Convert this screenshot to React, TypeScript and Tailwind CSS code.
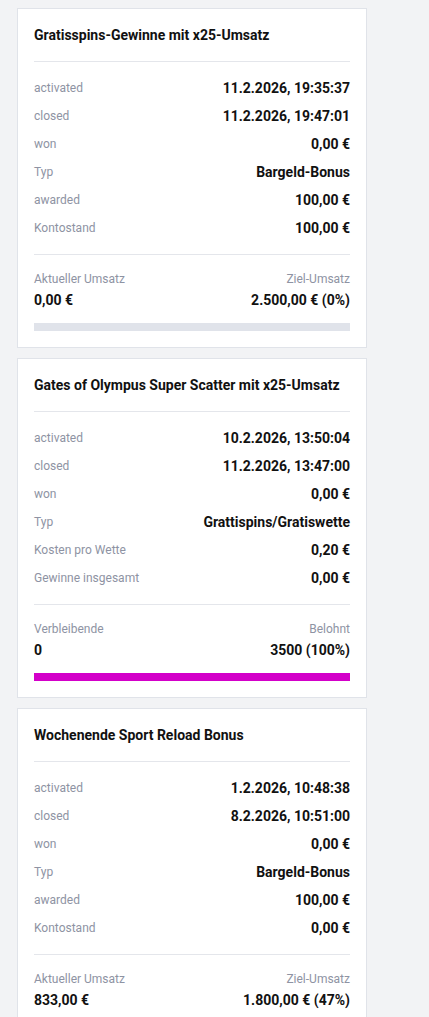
import React from "react";

type Row = { label: string; value: string };
type Card = {
  title: string;
  rows: Row[];
  leftLabel: string;
  leftValue: string;
  rightLabel: string;
  rightValue: string;
  pct: number;
};

const cards: Card[] = [
  {
    title: "Gratisspins-Gewinne mit x25-Umsatz",
    rows: [
      { label: "activated", value: "11.2.2026, 19:35:37" },
      { label: "closed", value: "11.2.2026, 19:47:01" },
      { label: "won", value: "0,00 €" },
      { label: "Typ", value: "Bargeld-Bonus" },
      { label: "awarded", value: "100,00 €" },
      { label: "Kontostand", value: "100,00 €" },
    ],
    leftLabel: "Aktueller Umsatz",
    leftValue: "0,00 €",
    rightLabel: "Ziel-Umsatz",
    rightValue: "2.500,00 € (0%)",
    pct: 0,
  },
  {
    title: "Gates of Olympus Super Scatter mit x25-Umsatz",
    rows: [
      { label: "activated", value: "10.2.2026, 13:50:04" },
      { label: "closed", value: "11.2.2026, 13:47:00" },
      { label: "won", value: "0,00 €" },
      { label: "Typ", value: "Grattispins/Gratiswette" },
      { label: "Kosten pro Wette", value: "0,20 €" },
      { label: "Gewinne insgesamt", value: "0,00 €" },
    ],
    leftLabel: "Verbleibende",
    leftValue: "0",
    rightLabel: "Belohnt",
    rightValue: "3500 (100%)",
    pct: 100,
  },
  {
    title: "Wochenende Sport Reload Bonus",
    rows: [
      { label: "activated", value: "1.2.2026, 10:48:38" },
      { label: "closed", value: "8.2.2026, 10:51:00" },
      { label: "won", value: "0,00 €" },
      { label: "Typ", value: "Bargeld-Bonus" },
      { label: "awarded", value: "100,00 €" },
      { label: "Kontostand", value: "0,00 €" },
    ],
    leftLabel: "Aktueller Umsatz",
    leftValue: "833,00 €",
    rightLabel: "Ziel-Umsatz",
    rightValue: "1.800,00 € (47%)",
    pct: 47,
  },
];

function BonusCard({ c }: { c: Card }) {
  return (
    <div className="w-[350px] bg-white border border-[#e0e3e9] p-4">
      <div className="text-sm font-bold leading-5 text-[#111111]">{c.title}</div>
      <div className="mt-4 border-t border-[#e4e6eb]" />
      <div className="pt-3">
        {c.rows.map((r) => (
          <div key={r.label} className="h-7 flex items-center justify-between">
            <span className="text-xs leading-4 text-[#8e93a3]">{r.label}</span>
            <span className="text-sm font-bold leading-5 text-[#111111]">{r.value}</span>
          </div>
        ))}
      </div>
      <div className="mt-3 border-t border-[#e4e6eb]" />
      <div className="pt-4 flex justify-between">
        <div className="flex flex-col">
          <span className="text-xs leading-4 text-[#8e93a3]">{c.leftLabel}</span>
          <span className="mt-[3px] text-sm font-bold leading-5 text-[#111111]">{c.leftValue}</span>
        </div>
        <div className="flex flex-col items-end">
          <span className="text-xs leading-4 text-[#8e93a3]">{c.rightLabel}</span>
          <span className="mt-[3px] text-sm font-bold leading-5 text-[#111111]">{c.rightValue}</span>
        </div>
      </div>
      <div className="mt-[13px] h-2 bg-[#e0e3ea]">
        <div className="h-2 bg-[#d300c9]" style={{ width: `${c.pct}%` }} />
      </div>
    </div>
  );
}

export default function App() {
  return (
    <div
      className="min-h-screen bg-[#f2f3f5] pt-2 pl-[17px] flex flex-col gap-[10px]"
      style={{ fontFamily: "Roboto, 'Liberation Sans', sans-serif" }}
    >
      {cards.map((c) => (
        <BonusCard key={c.title} c={c} />
      ))}
    </div>
  );
}
